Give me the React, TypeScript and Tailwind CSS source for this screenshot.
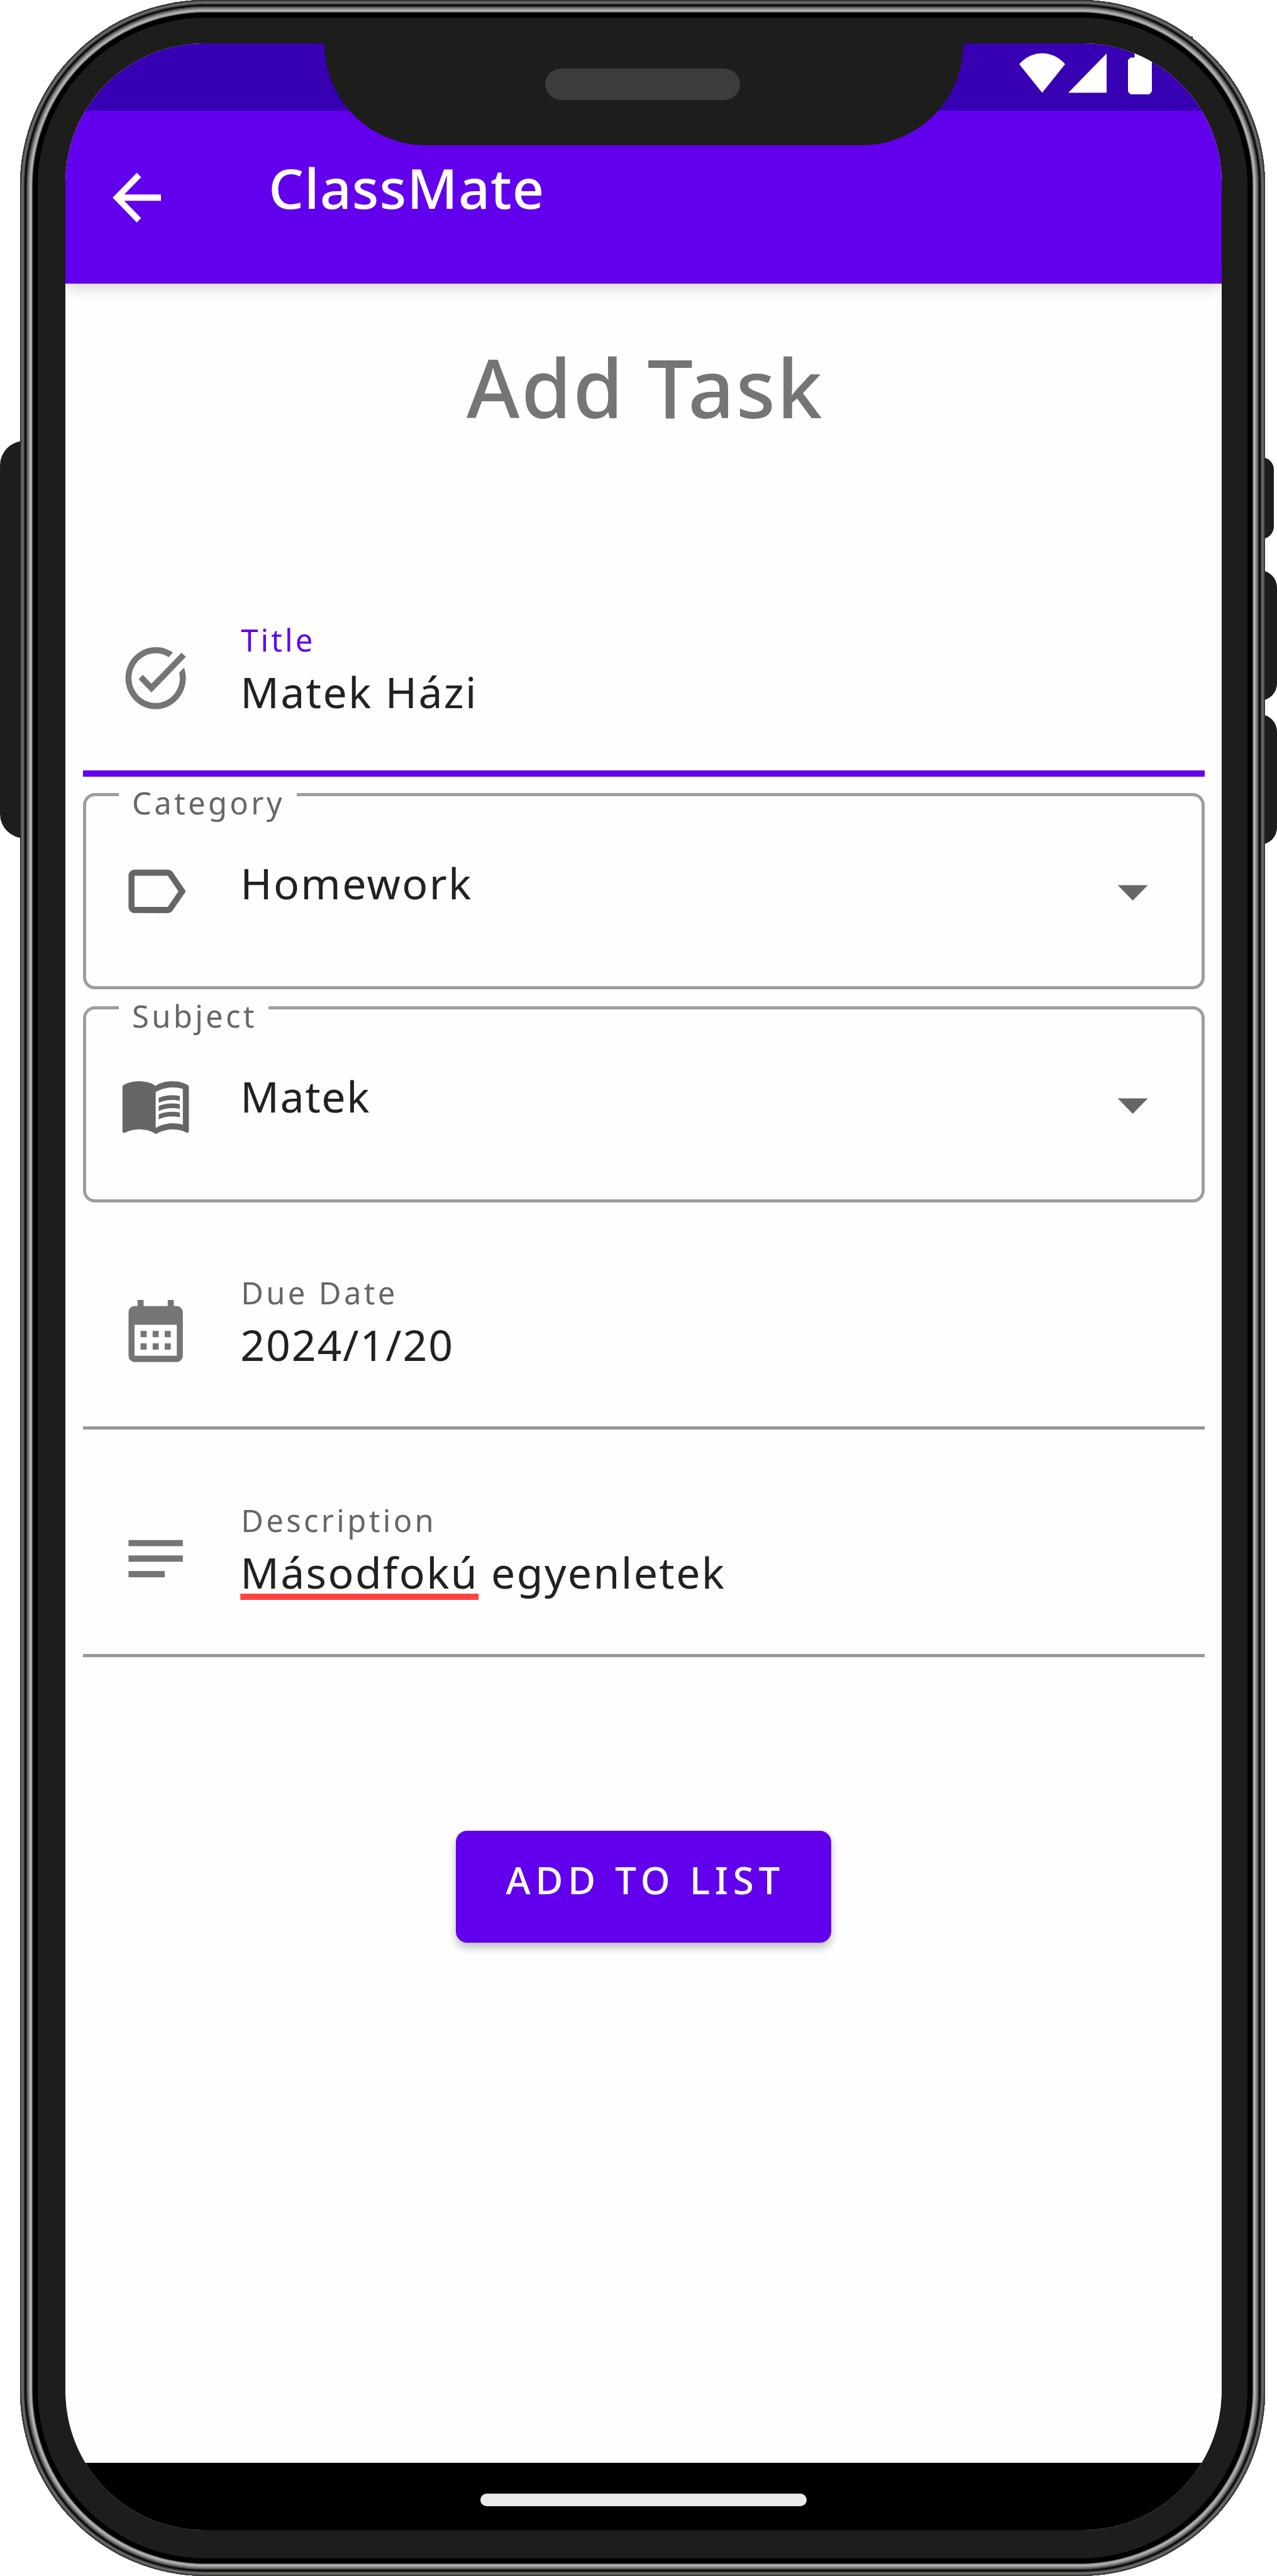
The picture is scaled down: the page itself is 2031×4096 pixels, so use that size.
import React from "react";
import type { ReactNode } from "react";
import type { IconType } from "react-icons";
import {
  MdArrowBack,
  MdArrowDropDown,
  MdCalendarMonth,
  MdLabelOutline,
  MdMenuBook,
  MdNotes,
  MdTaskAlt,
} from "react-icons/md";

const ICON = "h-[118.6px] w-[115.2px] shrink-0";

function StatusBar() {
  return (
    <div className="relative z-20 flex h-[107px] justify-end bg-[#3700b3] pr-[111px] pt-[15px]">
      <svg className="mr-[5px] h-[64px] w-[73px]" viewBox="0 0 73 64" fill="#fff">
        <path d="M0 18C20-5 53-5 73 18L36.500 63.500Z" />
      </svg>
      <svg className="mr-[34px] h-[64px] w-[61px]" viewBox="0 0 61 64" fill="#fff">
        <path d="M0 63.500L61 1V63.500Z" />
      </svg>
      <svg className="h-[66px] w-[38px]" viewBox="0 0 38 66" fill="#fff">
        <path d="M10.500 0H27.500V7.500H34L38 11.500V61.500L34 66H4L0 61.500V11.500L4 7.500H10.500Z" />
      </svg>
    </div>
  );
}

function AppBar() {
  return (
    <header className="relative z-10 flex h-[275px] bg-[#6200ee] pl-[56px] shadow-[0_4px_24px_rgba(0,0,0,0.2)]">
      <MdArrowBack
        preserveAspectRatio="none"
        className="mt-[79px] h-[118.6px] w-[115.2px] shrink-0 text-white"
      />
      <span className="ml-[152px] mt-[78px] text-[88px] font-medium leading-none tracking-[0.9px] text-white">
        ClassMate
      </span>
    </header>
  );
}

function FilledField({
  icon: Icon,
  label,
  active,
  valueClass = "tracking-[2.3px]",
  children,
}: {
  icon: IconType;
  label: string;
  active?: boolean;
  valueClass?: string;
  children: ReactNode;
}) {
  return (
    <div
      className={
        active
          ? "flex h-[263px] border-b-[10px] border-[#6200ee] pl-[58px]"
          : "flex h-[263px] border-b-[5px] border-[#969696] pl-[58px]"
      }
    >
      <Icon preserveAspectRatio="none" className={`${ICON} mt-[47px] text-[#757575]`} />
      <div className="ml-[76px] pt-[21px]">
        <div
          className={
            active
              ? "pl-[2px] text-[49px] leading-none tracking-[4.1px] text-[#6200ee]"
              : "pl-[2px] text-[49px] leading-none tracking-[4.3px] text-[#666]"
          }
        >
          {label}
        </div>
        <div
          className={`mt-[24px] whitespace-nowrap pl-px text-[68px] leading-none text-[#212121] ${valueClass}`}
        >
          {children}
        </div>
      </div>
    </div>
  );
}

function SelectField({
  icon: Icon,
  label,
  value,
  labelClass,
  valueClass,
  className,
}: {
  icon: IconType;
  label: string;
  value: string;
  labelClass: string;
  valueClass: string;
  className: string;
}) {
  return (
    <div
      className={`relative flex h-[312px] items-center rounded-[19px] border-[5px] border-[#9e9e9e] pl-[53px] pr-[52px] ${className}`}
    >
      <span
        className={`absolute -top-[14px] left-[52px] bg-[#fefefe] pl-[21px] text-[49px] leading-none tracking-[4.28px] text-[#666] ${labelClass}`}
      >
        {label}
      </span>
      <Icon preserveAspectRatio="none" className={`${ICON} text-[#666]`} />
      <span
        className={`mb-[26px] ml-[77px] flex-1 text-[68px] leading-none text-[#212121] ${valueClass}`}
      >
        {value}
      </span>
      <MdArrowDropDown preserveAspectRatio="none" className={`${ICON} text-[#666]`} />
    </div>
  );
}

function Screen() {
  return (
    <div className="flex h-[3954px] w-[1839px] flex-col overflow-hidden rounded-[221px] bg-[#fefefe]">
      <StatusBar />
      <AppBar />
      <main className="flex flex-1 flex-col pl-[28px] pr-[27px]">
        <h1 className="ml-[4px] mt-[100px] text-center text-[129px] font-medium leading-none tracking-[2.4px] text-[#757575]">
          Add Task
        </h1>
        <div className="mt-[292px]">
          <FilledField icon={MdTaskAlt} label="Title" active>
            Matek Házi
          </FilledField>
        </div>
        <SelectField
          icon={MdLabelOutline}
          label="Category"
          value="Homework"
          labelClass="w-[283px]"
          valueClass="tracking-[2.3px]"
          className="mt-[26px]"
        />
        <SelectField
          icon={MdMenuBook}
          label="Subject"
          value="Matek"
          labelClass="w-[238px]"
          valueClass="tracking-[1.6px]"
          className="mt-[27px]"
        />
        <div className="mt-[98px] flex flex-col gap-[99px]">
          <FilledField
            icon={MdCalendarMonth}
            label="Due Date"
            valueClass="tracking-[1.9px]"
          >
            2024/1/20
          </FilledField>
          <FilledField icon={MdNotes} label="Description">
            <span className="underline decoration-[#ff4444] decoration-[10px] underline-offset-[8px] [text-decoration-skip-ink:none]">
              Másodfokú
            </span>{" "}
            egyenletek
          </FilledField>
        </div>
        <button className="mr-[2px] mt-[276px] flex h-[178px] w-[597px] self-center whitespace-nowrap rounded-[18px] bg-[#6200ee] pl-[80px] pt-[48px] text-[60px] font-medium leading-none tracking-[7.8px] text-white shadow-[0_8px_14px_rgba(0,0,0,0.25)]">
          ADD TO LIST
        </button>
      </main>
      <nav className="flex h-[107px] justify-center bg-black pt-[49px]">
        <div className="h-[20px] w-[519px] rounded-full bg-[#ebebeb]" />
      </nav>
    </div>
  );
}

export default function App() {
  return (
    <div className="relative flex h-[4096px] w-[2031px] overflow-hidden bg-white font-['Noto_Sans',sans-serif]">
      <div className="absolute left-[87px] top-[121px] h-[20px] w-[20px] bg-[#3700b3]" />
      <div className="absolute left-[1877px] top-[58px] h-[20px] w-[20px] bg-[#3700b3]" />
      <div className="w-[32px] pt-[701px]">
        <div className="h-[632px] w-[80px] rounded-[39px] bg-[#1d1d1b]" />
      </div>
      <div className="relative z-10 h-[4096px] w-[1980px] rounded-[295px] bg-[#1d1d1b] pl-[72px] pt-[69px] shadow-[inset_0_0_0_1px_#2f2f2e,inset_0_0_0_2px_#444443,inset_0_0_0_3px_#5a5a58,inset_0_0_0_4px_#6c6c6a,inset_0_0_0_5px_#6a6a68,inset_0_0_0_6px_#555553,inset_0_0_0_7px_#3a3a38,inset_0_0_0_8px_#161615,inset_0_0_0_9px_#000000,inset_0_0_0_10px_#1c1c1b,inset_0_0_0_11px_#3a3a38,inset_0_0_0_12px_#555452,inset_0_0_0_13px_#6c6c6a,inset_0_0_0_14px_#7e7e7d,inset_0_0_0_15px_#949494,inset_0_0_0_16px_#a5a5a5,inset_0_0_0_17px_#b2b2b2,inset_0_0_0_18px_#b0b0b0,inset_0_0_0_19px_#9a9a9a,inset_0_0_0_20px_#505050,inset_0_0_0_28px_#000000]">
        <Screen />
        <div className="absolute left-[484px] top-[68px] z-20 h-[163px] w-[1016px] rounded-b-[161px] bg-[#1d1d1b]" />
        <div className="absolute left-[835px] top-[109px] z-20 h-[50px] w-[310px] rounded-full bg-[#3c3c3a]" />
      </div>
      <div className="flex w-[19px] flex-col items-end pt-[727px]">
        <div className="mr-[5px] h-[130px] w-[50px] shrink-0 rounded-[20px] bg-[#1d1d1b]" />
        <div className="mt-[50px] h-[207px] w-[60px] shrink-0 rounded-[27px] bg-[#1d1d1b]" />
        <div className="mt-[22px] h-[207px] w-[60px] shrink-0 rounded-[27px] bg-[#1d1d1b]" />
      </div>
    </div>
  );
}
